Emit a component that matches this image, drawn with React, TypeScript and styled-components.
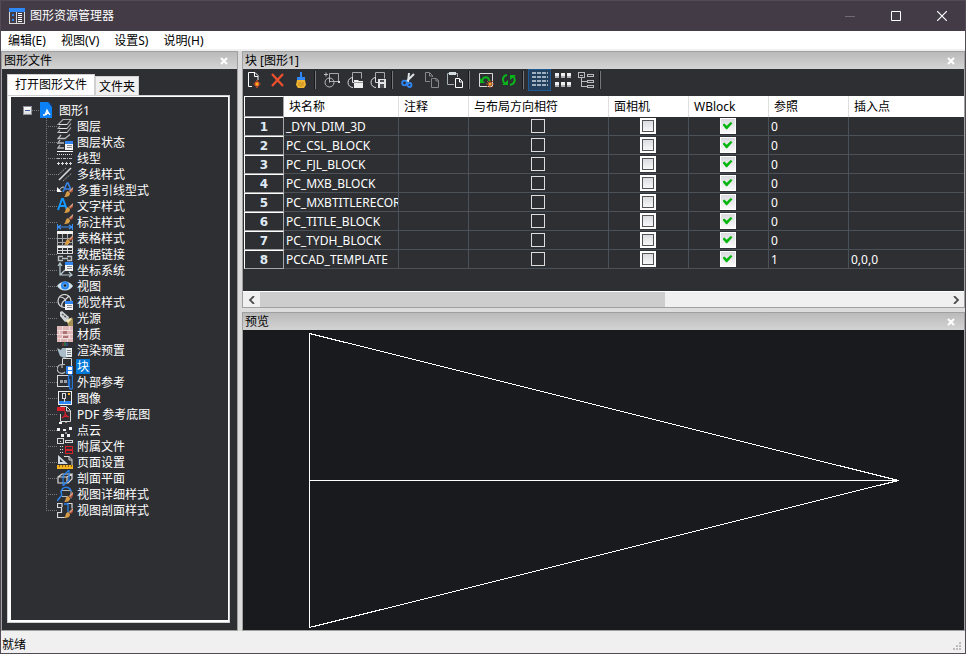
import React from "react";
import styled, { createGlobalStyle, css } from "styled-components";

const UI_FONT = '"Noto Sans", "Noto Sans CJK SC", sans-serif';
const DARK = "#2e2f33";
const EDGE = "#a0a0a0";
const LIGHT = "#d9d9d9";
const GREY = "#b9bcbf";
const BLUE = "#3a8ff2";

const GlobalStyle = createGlobalStyle`
  * { box-sizing: border-box; }
  body { margin: 0; font: 12px/16px ${UI_FONT}; color: #000; }
  button, input { font: inherit; color: inherit; margin: 0; padding: 0; }
`;

const Window = styled.div`
  display: flex;
  flex-direction: column;
  min-height: 100vh;
  border: 1px solid #524b56;
  background: #f0f0f0;
`;

const TitleBar = styled.header`
  display: flex;
  align-items: center;
  height: 30px;
  padding-left: 8px;
  background: #433b46;
  color: #fff;
`;

const TitleText = styled.h1`
  flex: 1;
  margin: 0 0 0 5px;
  font-size: 12px;
  font-weight: 400;
`;

const CaptionButton = styled.button`
  display: grid;
  place-items: center;
  width: 46px;
  height: 30px;
  border: 0;
  background: none;
`;

const MenuBar = styled.nav`
  display: flex;
  gap: 15px;
  height: 18px;
  padding-left: 7px;
  background: #fff;
`;

const MenuItem = styled.button`
  border: 0;
  background: none;
  line-height: 20px;
`;

const Workspace = styled.main`
  flex: 1;
  display: grid;
  grid-template-columns: 237px minmax(0, 1fr);
  gap: 4px;
  margin-top: 2px;
  background: #dcdcdc;
`;

const RightSide = styled.div`
  display: flex;
  flex-direction: column;
  gap: 4px;
`;

const Panel = styled.section<{ $grow?: boolean; $tone?: string }>`
  display: flex;
  flex-direction: column;
  min-width: 0;
  ${(p) => p.$grow && css`flex: 1;`}
  border: 1px solid ${EDGE};
  background: ${(p) => p.$tone ?? DARK};
`;

const PanelHeader = styled.div`
  display: flex;
  align-items: center;
  justify-content: space-between;
  height: 17px;
  padding: 0 8px 0 2px;
  background: linear-gradient(#bababa, #d3d3d3);
`;

const PanelTitle = styled.h2`
  margin: 0;
  font-size: 12px;
  font-weight: 400;
`;

const PanelClose = styled.button`
  display: grid;
  place-items: center;
  width: 10px;
  height: 10px;
  border: 0;
  background: none;
`;

const TabArea = styled.div`
  flex: 1;
  display: flex;
  flex-direction: column;
  padding: 5px 7px 7px 5px;
`;

const TabStrip = styled.div`
  display: flex;
  align-items: flex-end;
`;

const Tab = styled.button<{ $active?: boolean }>`
  height: ${(p) => (p.$active ? 21 : 19)}px;
  padding: ${(p) => (p.$active ? "0 7px" : "2px 3px 0")};
  border: 1px solid #d0d0d0;
  border-bottom: 0;
  background: ${(p) => (p.$active ? "#fff" : "#f0f0f0")};
`;

const TabBody = styled.div`
  flex: 1;
  border: solid #fff;
  border-width: 2px 2px 3px 4px;
  outline: 1px solid #d0d0d0;
  outline-offset: -1px;
  padding: 5px 0 0 12px;
`;

const TreeRow = styled.div`
  display: flex;
  align-items: center;
  height: 16px;
  color: #fff;
`;

const Expander = styled.button`
  display: grid;
  place-items: center;
  width: 9px;
  height: 9px;
  border: 1px solid #8f9299;
  background: linear-gradient(#fff, #dcdcdc);
`;

const RootLink = styled.span`
  width: 7px;
  height: 1px;
  background: repeating-linear-gradient(90deg, #77797d 0 1px, transparent 1px 2px);
`;

const Branches = styled.ul`
  margin: 0 0 0 23px;
  padding: 0;
  list-style: none;
`;

const Branch = styled.li`
  display: flex;
  align-items: center;
  height: 16px;
  color: #fff;
  background:
    repeating-linear-gradient(#77797d 0 1px, transparent 1px 2px) 0 0 / 1px 100% no-repeat,
    repeating-linear-gradient(90deg, #77797d 0 1px, transparent 1px 2px) 0 8px / 11px 1px no-repeat;
  padding-left: 11px;
  &:last-child { background-size: 1px 9px, 11px 1px; }
`;

const NodeLabel = styled.button<{ $selected?: boolean }>`
  height: 15px;
  margin-left: 3px;
  padding: 0 1px;
  border: 0;
  line-height: 16px;
  white-space: nowrap;
  background: ${(p) => (p.$selected ? "#0078d7" : "none")};
`;

const Toolbar = styled.div`
  display: flex;
  height: 27px;
`;

const ToolGroup = styled.div`
  display: flex;
  height: 22px;
  &::after {
    content: "";
    width: 2px;
    height: 18px;
    margin: 2px 4px 2px 2px;
    background: linear-gradient(90deg, #17181a 50%, #76787c 50%);
  }
`;

const ToolButton = styled.button<{ $pressed?: boolean }>`
  display: grid;
  place-items: center start;
  width: 23px;
  height: 22px;
  padding-left: 3px;
  border: 1px solid ${(p) => (p.$pressed ? "#1d5a94" : "transparent")};
  background: ${(p) => (p.$pressed ? "#22405d" : "none")};
`;

const TableArea = styled.div`
  padding: 0 0 22px 1px;
`;

const Table = styled.table`
  width: 100%;
  table-layout: fixed;
  border-collapse: separate;
  border-spacing: 0;
  color: #fff;
`;

const HeadCell = styled.th`
  height: 21px;
  padding: 0 5px;
  border-right: 1px solid #dedede;
  background: #fff;
  color: #000;
  font-weight: 400;
  text-align: left;
  line-height: 20px;
  &:last-child { border-right: 0; }
`;

const RowHead = styled.th`
  height: 19px;
  padding: 0;
  border: 1px solid #a5a7a9;
  border-top-color: #fff;
  border-left-color: #fff;
  background: ${DARK};
  color: #dfeaf5;
  font: bold 12px/16px "DejaVu Sans", sans-serif;
`;

const Cell = styled.td<{ $center?: boolean }>`
  height: 19px;
  padding: ${(p) => (p.$center ? "0 2px 0 0" : "0 0 0 2px")};
  border: solid #4b5158;
  border-width: 0 1px 1px 0;
  line-height: 17px;
  text-align: ${(p) => (p.$center ? "center" : "left")};
  vertical-align: middle;
  white-space: nowrap;
  overflow: hidden;
  &:last-child { border-right: 0; }
`;

const Tick = styled.input<{ $look: "plain" | "framed" | "green" }>`
  appearance: none;
  display: grid;
  place-items: center;
  margin: 0 auto;
  ${(p) => p.$look === "plain" && css`
    width: 14px; height: 14px; border: 1px solid #dcdcdc;
  `}
  ${(p) => p.$look !== "plain" && css`
    width: 16px; height: 16px; border: 1px solid #fff;
    background: linear-gradient(#d8dade, #fafafa);
  `}
  ${(p) => p.$look === "framed" && css`
    border-width: 2px;
    box-shadow: inset 0 0 0 1px #505358;
  `}
  &:checked::before {
    content: "";
    width: 10px;
    height: 8px;
    background: #00b50b;
    clip-path: polygon(0 34%, 18% 20%, 42% 46%, 82% 0, 100% 16%, 46% 92%, 36% 92%);
  }
`;

const ScrollBar = styled.div`
  display: flex;
  height: 16px;
  border-top: 1px solid #fff;
  background: #f0f0f0;
`;

const ScrollArrow = styled.button`
  display: grid;
  place-items: center;
  width: 17px;
  height: 15px;
  border: 0;
  background: none;
`;

const ScrollTrack = styled.div`
  flex: 1;
`;

const ScrollThumb = styled.div`
  width: 59%;
  height: 15px;
  background: #cdcdcd;
`;

const Preview = styled.div`
  flex: 1;
  display: grid;
  min-height: 300px;
`;

const PreviewDrawing = styled.svg`
  width: 100%;
  height: 100%;
`;

const StatusBar = styled.footer`
  display: flex;
  justify-content: space-between;
  align-items: center;
  height: 22px;
  padding: 5px 2px 0 1px;
`;

const IconSvg = styled.svg`
  display: block;
  flex: none;
`;

const Icon = ({ children, size = 16 }: { children: React.ReactNode; size?: number }) => (
  <IconSvg width={size} height={size} viewBox={`0 0 ${size} ${size}`} fill="none" stroke={LIGHT} aria-hidden="true">
    {children}
  </IconSvg>
);

const Brush = ({ y = 0 }: { y?: number }) => (
  <g stroke="none" transform={`translate(0 ${y})`}>
    <path d="M16 6v3l-2 2-2-2z" fill="#a9492d" />
    <path d="M16 5v2l-3 3-1-1z" fill="#d9a48a" />
    <path d="M11 9l2 2c0 3-2 4-6 4 2-1 1-5 4-6z" fill="#d79a45" />
  </g>
);

const Sheet = () => (
  <g stroke="none" shapeRendering="crispEdges">
    <path d="M8 8h8v8H8z" fill="#f4f4f4" />
    <path d="M8 7h8v3H8z" fill="#2f86f5" />
    <path d="M10 11h5v1h-5zM10 13h5v1h-5z" fill="#8b8e92" />
  </g>
);

const treeIcons: Record<string, React.ReactNode> = {
  layers: (
    <g stroke="#a9acaf" strokeWidth="1.2">
      <path d="M6 1.5h8l-4 5H1zM3 8l-2 2.500h9l4-5M3 12l-2 2.500h9l4-5" />
      <path d="M2 6.500h8M2 10.500h8M2 14.500h8" stroke="#e4e4e4" />
    </g>
  ),
  layerState: (
    <>
      <path d="M4 1l-3 3.500h7l5-4M3 6l-2 3h6M3 11l-2 3h6" stroke={GREY} strokeWidth="1.3" />
      <Sheet />
    </>
  ),
  linetype: (
    <g shapeRendering="crispEdges">
      <path d="M0 1.5h16" stroke="#fff" />
      <path d="M0 4.5h16" strokeDasharray="1 1" />
      <path d="M0 8.5h16" strokeDasharray="3 1 1 1" stroke={GREY} />
      <path d="M0 13.5h16M1.5 12v3M5.5 12v3M9.5 12v3M13.5 12v3" strokeDasharray="3 1" />
    </g>
  ),
  multiline: (
    <>
      <path d="M1 9l8-7M6 15l9-8" stroke="#96999c" strokeDasharray="2 1" />
      <path d="M2 14L14 2" strokeWidth="1.6" />
    </>
  ),
  mleader: (
    <>
      <path d="M7 5c-3 0-4 2-5 4" />
      <path d="M0 5v5h5z" fill="#fff" stroke="none" />
      <path d="M6 10L10 1h1l4 9M8 7h6" stroke="#3a86e8" strokeWidth="1.6" />
      <Brush />
    </>
  ),
  textStyle: (
    <>
      <path d="M1 12L5 1h1l4 11M3 8h6" stroke="#1598ff" strokeWidth="2" />
      <Brush />
    </>
  ),
  dimStyle: (
    <>
      <Brush y={-5} />
      <path d="M.5 10v6M15.5 10v6M1 13h14M4 11l-3 2 3 2M12 11l3 2-3 2" stroke={BLUE} strokeWidth="1.2" />
    </>
  ),
  tableStyle: (
    <>
      <path d="M0 1h16v3H0z" fill="#f2f2f2" stroke="none" />
      <path d="M.5 4v11.500h15V4M.5 8.500h15M.5 12.500h15M5.500 4v11M10.500 4v11" stroke="#a6a9ac" shapeRendering="crispEdges" />
      <Brush />
    </>
  ),
  dataLink: (
    <>
      <path d="M0 0h16v2H0z" fill="#f2f2f2" stroke="none" />
      <path d="M.5 1v6.500h15V1M.5 4.500h15M5.500 1v6M10.500 1v6" shapeRendering="crispEdges" />
      <path d="M6 10.500H1.500v4H6M10 10.500h4.500v4H10M5 12.500h6" stroke={GREY} strokeWidth="1.4" />
    </>
  ),
  ucs: (
    <>
      <path d="M3 1v12h12M1 4l2-3 2 3M12 10l3 3-3 2M3 13l5-5" stroke="#b8cad0" strokeWidth="1.2" />
      <g transform="translate(0 -7)"><Sheet /></g>
    </>
  ),
  view: (
    <>
      <path d="M0 8c4-6 12-6 16 0-4 6-12 6-16 0z" fill="#cfe3ec" stroke="none" />
      <circle cx="8" cy="7.500" r="4" fill="#2385f5" stroke="none" />
      <circle cx="8" cy="7.500" r="1.700" fill="#16222e" stroke="#a7d8ff" strokeWidth=".6" />
    </>
  ),
  visualStyle: (
    <>
      <circle cx="7.500" cy="7" r="6.500" strokeWidth="1.200" />
      <path d="M3 3c4 0 6 3 6 7M12 2L8 6c-3 2-4 4-3 7" strokeWidth="1.200" />
      <Sheet />
    </>
  ),
  light: (
    <>
      <path d="M3 2l2-1 7 6-1 4-3 1-5-6z" fill="#d2d5d7" stroke="none" />
      <path d="M5 4l5 4" stroke="#4f5256" strokeWidth="1.500" strokeDasharray="2 1" />
      <path d="M10 11l5-4 1 3v6h-5z" fill="#a48f55" stroke="none" />
      <path d="M9 11l4-3 2 1-4 4z" fill="#f6e9b4" stroke="none" />
    </>
  ),
  material: (
    <g shapeRendering="crispEdges">
      <path d="M0 0h16v16H0z" fill="#dfb7b7" stroke="none" />
      <path d="M0 4.500h16M0 8.500h16M0 12.500h16M5.500 0v4M12.500 0v4M2.500 4v4M9.500 4v4M5.500 8v4M12.500 8v4M3.500 12v4M10.500 12v4" stroke="#f0dcdc" />
      <path d="M6 5h4v3H6zM6 10h5v2H6z" fill="#ad7476" stroke="none" />
    </g>
  ),
  render: (
    <>
      <path d="M6 1v3" stroke="#713b38" strokeWidth="2" />
      <path d="M8 0v4" stroke="#2f6a42" strokeWidth="2" />
      <path d="M10 1v3" stroke="#334a80" strokeWidth="2" />
      <path d="M0 6l4 2 1-2h5l2 4-1 5-4 1-4-2z" fill="#a9bcc7" stroke="none" />
      <path d="M9 6h6v9H9z" fill="#e8edf0" stroke="none" />
      <path d="M10 8.500h4M10 10.500h4M10 12.500h4" stroke="#7d858a" />
    </>
  ),
  block: (
    <>
      <path d="M5.500 6V.5h9V10" />
      <path d="M8 6.500H4a4.500 4.500 0 1 0 4 7.500M5 6v4" stroke={GREY} strokeWidth="1.200" />
      <path d="M9 8h7v8H9z" fill="#2f86f5" stroke="none" />
      <path d="M11 9h4v3h-4zM11 13h4v3h-4z" fill="#fff" stroke="none" />
    </>
  ),
  xref: (
    <>
      <path d="M.5 1.500h11v11H.5z" shapeRendering="crispEdges" />
      <path d="M3 6h3v3H3zM7 6h3v3H7z" fill="#9da1a5" stroke="none" />
      <path d="M11.500 12V3c0-3 4-3 4 0v10c0 3-3 3-3 0V5" stroke="#2475d6" strokeWidth="1.400" />
    </>
  ),
  image: (
    <g shapeRendering="crispEdges">
      <path d="M1.500 1.500h13v13h-13z" stroke="#f0f0f0" />
      <path d="M2 11h12v3H2z" fill="#2f86f5" stroke="none" />
      <path d="M5.500 3.500h3v5h-3zM7 9v3" />
      <path d="M11 3h2v2h-2z" fill="#ffb11e" stroke="none" />
    </g>
  ),
  pdf: (
    <>
      <path d="M3.500 4V.5h6l4 4v11h-10V8M9.500 1v4h4" />
      <path d="M0 1h8v4H0z" fill="#d51f2b" stroke="none" />
      <path d="M5 12c3-2 4-5 3-6 0 3 1 4 4 5-3-1-6 0-7 1z" stroke="#d51f2b" strokeWidth="1.200" />
    </>
  ),
  points: (
    <g stroke="none" fill="#f3f3f3">
      <path d="M2 0h3v2H2zM0 6h3v3H0zM6 7h3v2H6zM12 5h3v3h-3zM4 12h3v3H4zM10 12h3v3h-3z" />
      <path d="M8 0h2v1H8zM8 10h2v2H8z" fill="#8e9194" />
    </g>
  ),
  attached: (
    <g shapeRendering="crispEdges">
      <path d="M.5.500h6v5h-6zM8.500 2.500h7v2h-7zM3 3v1" />
      <path d="M3.500 8v8M5.500 8v8" strokeDasharray="1 2" />
      <path d="M8.500 8.500h7v3h-7zM8.500 12.500h7v3h-7z" stroke="#d51f2b" />
    </g>
  ),
  pageSetup: (
    <>
      <path d="M7 2.500h5l3 3V11M12 2v4h3" />
      <path d="M1 1l10 9H1zM3 5v3h3z" fill="#cfd8de" fillRule="evenodd" stroke="none" />
      <path d="M0 11h16v4H0z" fill="#f3b321" stroke="none" />
      <path d="M2.500 11v2M5.500 11v2M8.500 11v2M11.500 11v2M14.500 11v2" stroke="#8e6000" />
    </>
  ),
  section: (
    <>
      <path d="M1 7h9l5-3v5l-4 4H1zM1 7l4-3h10M10 7v6" strokeWidth="1.200" />
      <path d="M6 6l6-6v10l-6 6z" stroke="#2385f5" strokeWidth="1.200" />
    </>
  ),
  detail: (
    <>
      <path d="M5 4.500h9v8M5 10.500h6" stroke={GREY} />
      <path d="M5 9a5 5 0 1 1 9-4M5 9l-5 6" stroke="#2b82e8" strokeWidth="1.600" />
      <Brush y={1} />
    </>
  ),
  viewSection: (
    <>
      <path d="M5 1.500H.5v4h4v5H.5v5h8M5 1v4M10 1.500h5v5" strokeWidth="1.200" />
      <path d="M7 2h4v9" stroke="#2b82e8" strokeWidth="1.300" />
      <Brush y={1} />
    </>
  ),
};

const nodes: [string, string][] = [
  ["layers", "图层"], ["layerState", "图层状态"], ["linetype", "线型"], ["multiline", "多线样式"],
  ["mleader", "多重引线型式"], ["textStyle", "文字样式"], ["dimStyle", "标注样式"], ["tableStyle", "表格样式"],
  ["dataLink", "数据链接"], ["ucs", "坐标系统"], ["view", "视图"], ["visualStyle", "视觉样式"],
  ["light", "光源"], ["material", "材质"], ["render", "渲染预置"], ["block", "块"],
  ["xref", "外部参考"], ["image", "图像"], ["pdf", "PDF 参考底图"], ["points", "点云"],
  ["attached", "附属文件"], ["pageSetup", "页面设置"], ["section", "剖面平面"],
  ["detail", "视图详细样式"], ["viewSection", "视图剖面样式"],
];

const circleAndBox = (
  <>
    <path d="M5.500 5V.5h9v6" stroke="#a6a9ac" />
    <path d="M6 5.500a5 5 0 1 0 0 10M5.500 5v5.500H8" />
  </>
);

const toolGroups: { label: string; pressed?: boolean; art: React.ReactNode }[][] = [
  [
    {
      label: "新建",
      art: (
        <>
          <path d="M5 14.500H1.500V.5H8l3 3V8M7.500 1v3.500H11" stroke="#fff" />
          <path d="M10 8v8M6.500 12h7M8 10l4 4M12 10l-4 4" stroke="#e4572b" strokeWidth="1.200" />
          <circle cx="10" cy="12" r="1.500" fill="#ffb11e" stroke="none" />
        </>
      ),
    },
    { label: "删除", art: <path d="M2 2l11 12M13 2L2 14" stroke="#f0512d" strokeWidth="2.200" /> },
    {
      label: "清理",
      art: (
        <>
          <path d="M7 0h2v5h3v3H4V5h3z" fill="#2f86f5" stroke="none" />
          <path d="M4 8h8l1 5-2 3H5l-2-3z" fill="#efb631" stroke="none" />
          <path d="M6 10v4M8 10v5M10 10v4" stroke="#c98c24" />
        </>
      ),
    },
  ],
  [
    {
      label: "插入块",
      art: (
        <>
          <path d="M5.500 1.500h9v8h-9z" stroke="#a6a9ac" />
          <circle cx="5.500" cy="10.500" r="4.500" stroke={GREY} />
          <path d="M5.500 5v5.500M2 .5v4M0 2.500h4" stroke={GREY} />
          <path d="M14 9h2v2h-2z" fill="#ddd" stroke="none" />
        </>
      ),
    },
    {
      label: "打开块",
      art: (
        <>
          {circleAndBox}
          <path d="M7 8h4l1 1h4v7H7z" fill="#eee" stroke="none" />
          <path d="M7 10.500h9" stroke="#999" />
        </>
      ),
    },
    {
      label: "保存块",
      art: (
        <>
          {circleAndBox}
          <path d="M8 7h8v9H8z" fill="#e4e4e4" stroke="none" />
          <path d="M10 8h4v2h-4zM10 12h4v4h-4z" fill="#4d4f53" stroke="none" />
        </>
      ),
    },
  ],
  [
    {
      label: "剪切",
      art: (
        <>
          <path d="M8 1l-1 9M13 2L5 10" stroke="#dde3e7" strokeWidth="2" />
          <circle cx="3.500" cy="11" r="2.300" stroke="#2f86f5" strokeWidth="1.800" />
          <circle cx="8.500" cy="13" r="2" stroke="#2f86f5" strokeWidth="1.800" />
        </>
      ),
    },
    { label: "复制", art: <path d="M6 9.500H1.500V.5h4l3 3V5M5.500 1v3H8M8.500 6.500h4l2 2v7h-7v-9zM12 7v2h3" stroke="#85888c" /> },
    {
      label: "粘贴",
      art: (
        <>
          <path d="M7 12.500H.5v-11h10V5" stroke="#a8b2b8" />
          <path d="M2 0h7v3H2z" fill="#d5dde1" stroke="none" />
          <path d="M8.500 6.500h4l3 3v6h-7zM12.500 7v3h3" stroke="#fff" />
        </>
      ),
    },
  ],
  [
    {
      label: "更新预览",
      art: (
        <>
          <path d="M1.500 1.500h13v13h-13z" />
          <path d="M4 9c1-5 7-5 7 0" stroke="#09b51b" strokeWidth="2" />
          <path d="M2 6v5h5z" fill="#09b51b" stroke="none" />
          <path d="M12 8v8M8 12h8M9 9l6 6M15 9l-6 6" stroke="#b8592a" />
          <circle cx="12" cy="12" r="1.500" fill="#ffa52c" stroke="none" />
        </>
      ),
    },
    {
      label: "刷新",
      art: (
        <>
          <path d="M6 3C1 4 1 9 4 12M9 13c5-1 6-6 3-9" stroke="#09b51b" strokeWidth="2" />
          <path d="M1 13h6V8zM15 3H9v5z" fill="#09b51b" stroke="none" />
        </>
      ),
    },
  ],
  [
    {
      label: "详细信息",
      pressed: true,
      art: (
        <g strokeWidth="2" shapeRendering="crispEdges" stroke="#9fb0c0">
          <path d="M0 1h16M0 5h16M0 9h16M0 13h16" strokeDasharray="4 1" />
        </g>
      ),
    },
    {
      label: "图标",
      art: (
        <g stroke="none" shapeRendering="crispEdges">
          <path d="M0 1h4v5H0zM6 1h4v5H6zM12 1h4v5h-4zM0 10h4v5H0zM6 10h4v5H6zM12 10h4v5h-4z" fill="#f0f0f0" />
          <path d="M0 4h4v2H0zM6 4h4v2H6zM12 4h4v2h-4zM0 13h4v2H0zM6 13h4v2H6zM12 13h4v2h-4z" fill="#adb0b4" />
        </g>
      ),
    },
    {
      label: "树状",
      art: (
        <g stroke={GREY} shapeRendering="crispEdges">
          <path d="M.5.500h6v5h-6zM2 3h3M9.500 2.500h6v2h-6zM3.500 6v8.500h5M3.500 9.500h5M9.500 8.500h6v2h-6zM9.500 13.500h6v2h-6z" />
        </g>
      ),
    },
  ],
];

const columns = ["块名称", "注释", "与布局方向相符", "面相机", "WBlock", "参照", "插入点"];
const widths = [40, 115, 70, 140, 80, 80, 80, undefined];

const blocks = [
  { name: "_DYN_DIM_3D", refs: 0, point: "" },
  { name: "PC_CSL_BLOCK", refs: 0, point: "" },
  { name: "PC_FJL_BLOCK", refs: 0, point: "" },
  { name: "PC_MXB_BLOCK", refs: 0, point: "" },
  { name: "PC_MXBTITLERECORD", refs: 0, point: "" },
  { name: "PC_TITLE_BLOCK", refs: 0, point: "" },
  { name: "PC_TYDH_BLOCK", refs: 0, point: "" },
  { name: "PCCAD_TEMPLATE", refs: 1, point: "0,0,0" },
];

const Header = ({ title }: { title: string }) => (
  <PanelHeader>
    <PanelTitle>{title}</PanelTitle>
    <PanelClose aria-label={`关闭${title}`}>
      <Icon size={8}><path d="M1 1l6 6M7 1L1 7" stroke="#fff" strokeWidth="2" /></Icon>
    </PanelClose>
  </PanelHeader>
);

export default function App() {
  return (
    <>
      <GlobalStyle />
      <Window>
        <TitleBar>
          <Icon>
            <g shapeRendering="crispEdges">
              <path d="M.5.500h15v15H.5zM7.500 4v11" />
              <path d="M0 0h16v4H0z" fill="#2f86f5" stroke="none" />
              <path d="M3 6h2v2H3zM3 11h2v2H3z" fill="#2f86f5" stroke="none" />
              <path d="M9 5.500h4M9 7.500h4M9 9.500h4M9 11.500h4M9 13.500h4" stroke="#fff" />
            </g>
          </Icon>
          <TitleText>图形资源管理器</TitleText>
          <CaptionButton aria-label="最小化"><Icon size={10}><path d="M0 5.500h10" stroke="#706976" /></Icon></CaptionButton>
          <CaptionButton aria-label="最大化"><Icon size={10}><path d="M.5.500h9v9h-9z" stroke="#fff" /></Icon></CaptionButton>
          <CaptionButton aria-label="关闭"><Icon size={10}><path d="M0 0l10 10M10 0L0 10" stroke="#fff" strokeWidth="1.200" /></Icon></CaptionButton>
        </TitleBar>
        <MenuBar>
          {["编辑(E)", "视图(V)", "设置S)", "说明(H)"].map((m) => <MenuItem key={m}>{m}</MenuItem>)}
        </MenuBar>
        <Workspace>
          <Panel>
            <Header title="图形文件" />
            <TabArea>
              <TabStrip role="tablist">
                <Tab role="tab" aria-selected="true" $active>打开图形文件</Tab>
                <Tab role="tab" aria-selected="false">文件夹</Tab>
              </TabStrip>
              <TabBody>
                <TreeRow>
                  <Expander aria-label="折叠"><Icon size={5}><path d="M0 2.500h5" stroke="#3c5f9c" /></Icon></Expander>
                  <RootLink />
                  <Icon>
                    <path d="M1 0h9l3 3v13H1z" fill="#0c80f5" stroke="none" />
                    <path d="M9 0l4 5V3l-3-3z" fill="#1e2c56" stroke="none" />
                    <path d="M4 13h2l2-5 1 2-2 3M9 10l2 3" stroke="#fff" strokeWidth="1.300" />
                  </Icon>
                  <NodeLabel>图形1</NodeLabel>
                </TreeRow>
                <Branches>
                  {nodes.map(([icon, label]) => (
                    <Branch key={icon}>
                      <Icon>{treeIcons[icon]}</Icon>
                      <NodeLabel $selected={icon === "block"}>{label}</NodeLabel>
                    </Branch>
                  ))}
                </Branches>
              </TabBody>
            </TabArea>
          </Panel>
          <RightSide>
            <Panel>
              <Header title="块 [图形1]" />
              <Toolbar>
                {toolGroups.map((group, i) => (
                  <ToolGroup key={i}>
                    {group.map((t) => (
                      <ToolButton key={t.label} aria-label={t.label} $pressed={t.pressed}>
                        <Icon>{t.art}</Icon>
                      </ToolButton>
                    ))}
                  </ToolGroup>
                ))}
              </Toolbar>
              <TableArea>
                <Table>
                  <colgroup>{widths.map((w, i) => <col key={i} width={w} />)}</colgroup>
                  <thead>
                    <tr>
                      <RowHead as="td" />
                      {columns.map((c) => <HeadCell key={c}>{c}</HeadCell>)}
                    </tr>
                  </thead>
                  <tbody>
                    {blocks.map((b, i) => (
                      <tr key={b.name}>
                        <RowHead scope="row">{i + 1}</RowHead>
                        <Cell>{b.name}</Cell>
                        <Cell />
                        <Cell $center><Tick type="checkbox" $look="plain" aria-label={`${b.name} 与布局方向相符`} /></Cell>
                        <Cell $center><Tick type="checkbox" $look="framed" aria-label={`${b.name} 面相机`} /></Cell>
                        <Cell $center><Tick type="checkbox" $look="green" defaultChecked aria-label={`${b.name} WBlock`} /></Cell>
                        <Cell>{b.refs}</Cell>
                        <Cell>{b.point}</Cell>
                      </tr>
                    ))}
                  </tbody>
                </Table>
              </TableArea>
              <ScrollBar>
                <ScrollArrow aria-label="向左滚动"><Icon size={8}><path d="M6 0L2 4l4 4" stroke="#505050" strokeWidth="1.800" /></Icon></ScrollArrow>
                <ScrollTrack><ScrollThumb /></ScrollTrack>
                <ScrollArrow aria-label="向右滚动"><Icon size={8}><path d="M2 0l4 4-4 4" stroke="#505050" strokeWidth="1.800" /></Icon></ScrollArrow>
              </ScrollBar>
            </Panel>
            <Panel $grow $tone="#191a1d">
              <Header title="预览" />
              <Preview>
                <PreviewDrawing viewBox="0 0 721 300" fill="none" stroke="#fff" shapeRendering="crispEdges" role="img" aria-label="块预览">
                  <path d="M66.500 3.500L655.500 150.500L66.500 297.500zM66.500 150.500h589" />
                </PreviewDrawing>
              </Preview>
            </Panel>
          </RightSide>
        </Workspace>
        <StatusBar>
          <span>就绪</span>
          <Icon>
            <path d="M12 5h2v2h-2zM9 8h2v2H9zM12 8h2v2h-2zM6 11h2v2H6zM9 11h2v2H9zM12 11h2v2h-2z" fill="#bdbdbd" stroke="none" />
          </Icon>
        </StatusBar>
      </Window>
    </>
  );
}
